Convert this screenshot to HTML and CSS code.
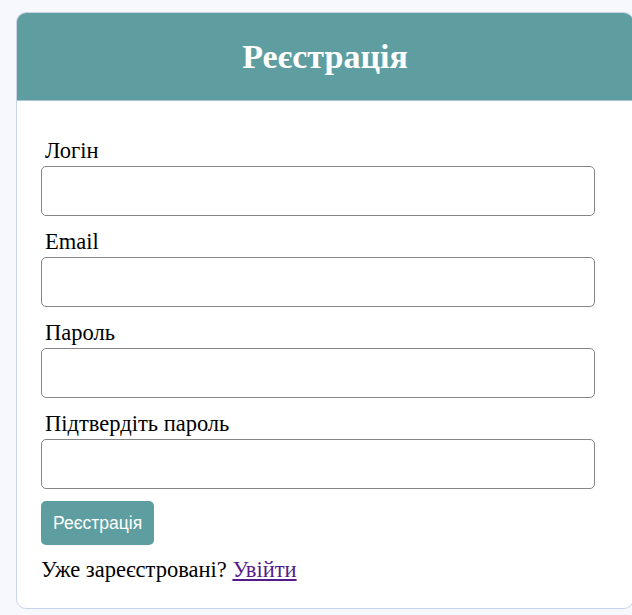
FILE: index.html
```html
<!DOCTYPE html>
<html lang="uk">
<head>
<meta charset="utf-8">
<title>Реєстрація</title>
<link rel="stylesheet" href="styles.css">
</head>
<body>
  <div class="card">
    <div class="card-header">
      <h1 class="card-title">Реєстрація</h1>
    </div>
    <form class="form">
      <div class="field">
        <label class="field-label" for="login">Логін</label>
        <input class="field-input" id="login" type="text">
      </div>
      <div class="field">
        <label class="field-label" for="email">Email</label>
        <input class="field-input" id="email" type="email">
      </div>
      <div class="field">
        <label class="field-label" for="password">Пароль</label>
        <input class="field-input" id="password" type="password">
      </div>
      <div class="field">
        <label class="field-label" for="password2">Підтвердіть пароль</label>
        <input class="field-input" id="password2" type="password">
      </div>
      <button class="submit" type="button">Реєстрація</button>
      <p class="login-note">Уже зареєстровані? <a class="login-link" href="#">Увійти</a></p>
    </form>
  </div>
</body>
</html>
```

FILE: styles.css
```css
html, body {
  margin: 0;
  padding: 0;
  background: #f7f8fd;
}

body {
  padding: 12px 0 0 16px;
  font-family: "Liberation Serif", "Times New Roman", serif;
  color: #000;
}

.card {
  width: 618px;
  box-sizing: border-box;
  background: #fff;
  border: 1px solid #c8d4ec;
  border-radius: 10px;
  overflow: hidden;
}

.card-header {
  height: 87px;
  background: #5f9ea0;
  display: flex;
  align-items: center;
  justify-content: center;
  border-bottom: 1px solid #a9c4d8;
}

.card-title {
  margin: 0;
  color: #fff;
  font-family: "Liberation Serif", "Times New Roman", serif;
  font-weight: bold;
  font-size: 34px;
  line-height: 1;
}

.form {
  display: flex;
  flex-direction: column;
  padding: 37px 38px 25px 24px;
}

.field {
  display: flex;
  flex-direction: column;
  margin-bottom: 13px;
}

.field:nth-of-type(4) {
  margin-bottom: 12px;
}

.field-label {
  margin-left: 4px;
  font-family: "Liberation Serif", "Times New Roman", serif;
  font-size: 22.5px;
  line-height: 26px;
}

.field-input {
  margin-top: 2px;
  height: 50px;
  box-sizing: border-box;
  width: 100%;
  border: 1px solid #858585;
  border-radius: 5px;
  background: #fff;
  padding: 4px 10px;
}

.submit {
  align-self: flex-start;
  height: 44px;
  padding: 0 12px;
  border: none;
  border-radius: 5px;
  background: #5f9ea0;
  color: #fff;
  font-family: "Liberation Sans", Arial, sans-serif;
  font-size: 17.5px;
}

.login-note {
  margin: 12px 0 0;
  font-family: "Liberation Serif", "Times New Roman", serif;
  font-size: 22.5px;
  line-height: 26px;
}

.login-link {
  color: #551a8b;
}
```
